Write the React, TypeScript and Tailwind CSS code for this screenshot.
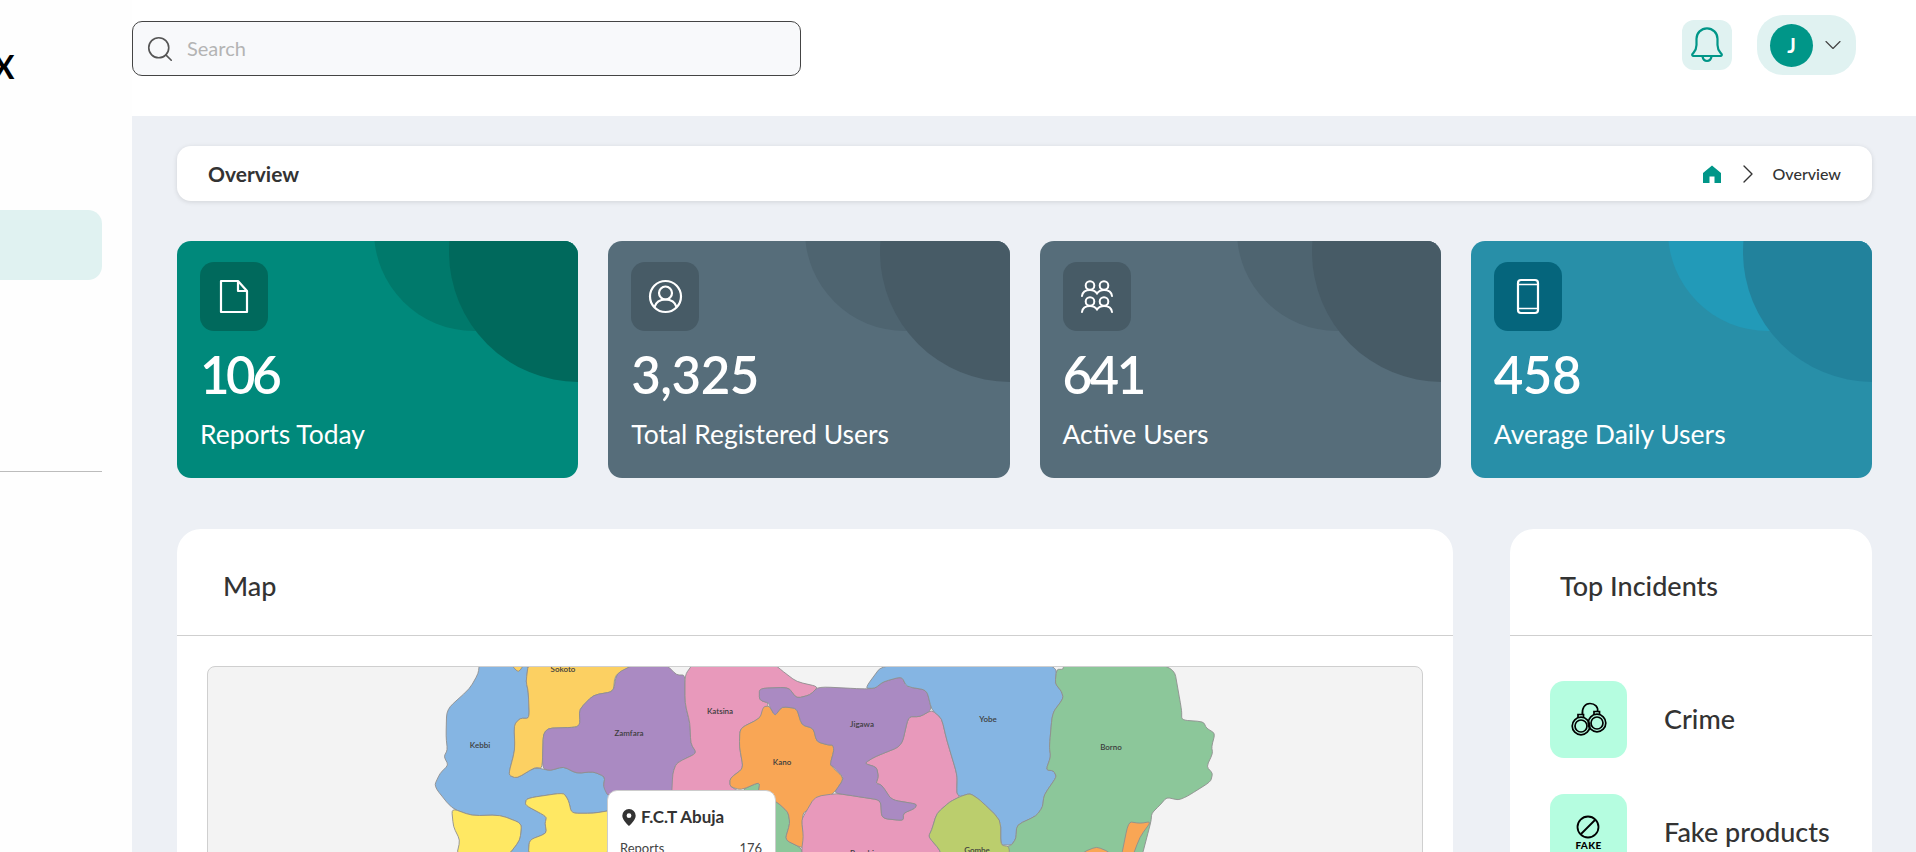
import React from "react";
import { Search, ChevronDown, ChevronRight } from "lucide-react";

type P = [number, number];
const z5 = (a: P[]): P[] => a.map(([x, y]) => [420 + x / 3, 650 + y / 3]);
const z6 = (a: P[]): P[] => a.map(([x, y]) => [820 + x / 3, 650 + y / 3]);

const lerp = (a: P, b: P, t: number): P => [a[0] + (b[0] - a[0]) * t, a[1] + (b[1] - a[1]) * t];
const fx = (p: P) => `${p[0].toFixed(1)} ${p[1].toFixed(1)}`;
const smooth = (p: P[]) => {
  const n = p.length;
  const t = 0.28;
  let d = `M${fx(lerp(p[n - 1], p[0], 1 - t))}`;
  for (let i = 0; i < n; i++) {
    const prev = p[(i + n - 1) % n];
    const next = p[(i + 1) % n];
    d += `L${fx(lerp(prev, p[i], 1 - t))}Q${fx(p[i])} ${fx(lerp(p[i], next, t))}`;
  }
  return d + "Z";
};

const regions: { fill: string; pts: P[] }[] = [
  { fill: "#85b5e3", pts: z5([[178,40],[175,70],[150,115],[80,178],[78,260],[82,300],[72,320],[85,345],[60,370],[42,408],[95,475],[155,497],[240,495],[305,520],[300,570],[265,616],[325,616],[328,570],[380,550],[375,520],[380,500],[315,465],[320,445],[430,428],[445,450],[455,490],[520,490],[580,480],[580,420],[550,410],[555,380],[520,365],[470,370],[430,350],[390,362],[345,352],[290,385],[265,375],[285,300],[282,225],[300,205],[328,205],[325,125],[318,95],[325,40]]) },
  { fill: "#fcd062", pts: z5([[325,40],[318,95],[325,125],[328,205],[300,205],[282,225],[285,300],[265,375],[290,385],[345,352],[367,355],[370,235],[470,232],[480,220],[478,178],[520,135],[580,125],[585,75],[640,45]]) },
  { fill: "#fcd062", pts: z5([[270,40],[295,68],[315,40]]) },
  { fill: "#aa8ac2", pts: z5([[640,45],[590,70],[580,125],[520,135],[478,178],[480,220],[470,232],[370,235],[367,355],[390,362],[430,350],[470,370],[520,365],[555,380],[550,410],[565,440],[770,440],[758,370],[770,338],[830,310],[812,280],[810,220],[795,160],[795,75],[770,75],[740,45]]) },
  { fill: "#e899bb", pts: z5([[820,40],[795,75],[795,160],[810,220],[812,280],[830,310],[770,338],[758,370],[755,440],[990,440],[930,410],[930,385],[970,355],[958,290],[960,235],[1020,205],[1048,160],[1018,150],[1020,115],[1105,112],[1130,145],[1170,135],[1195,110],[1130,95],[1090,65],[1060,40]]) },
  { fill: "#8cc79a", pts: [[741,790],[760,782],[758,795],[777,802],[788,812],[790,823],[785,840],[802,848],[806,870],[770,870],[765,800]] },
  { fill: "#f9a655", pts: [...z5([[930,410],[930,385],[970,355],[958,290],[960,235],[1020,205],[1030,170],[1048,168],[1065,198],[1085,170],[1130,175],[1145,225],[1180,235],[1190,275],[1225,285]]), [833,745],[834,750],[830,765],[844,778],[835,792],[815,808],[803,812],[802,827],[807,845],[802,848],[785,840],[790,823],[788,812],[777,802],[765,798],[758,794],[760,782],[741,790]] },
  { fill: "#e899bb", pts: [...z6([[-15,440],[50,430],[115,440],[182,450],[185,505],[250,512],[250,490],[285,475],[290,462],[215,450],[185,405],[168,400],[175,380],[170,352],[133,340],[165,320],[245,288],[265,200],[300,200],[335,180],[365,205],[380,270],[412,375],[410,430],[420,440],[390,455],[350,490],[335,540],[325,560],[360,600],[370,640],[-50,640],[-55,600],[-50,560],[-55,510],[-45,490]])] },
  { fill: "#aa8ac2", pts: [...z5([[1018,115],[1105,112],[1130,145],[1170,135],[1195,110]]), ...z6([[130,117],[165,115],[190,95],[245,80],[260,110],[320,120],[335,180],[300,200],[265,200],[245,288],[165,320],[133,340],[170,352],[175,380],[168,400],[185,405],[215,450],[290,462],[285,475],[250,490],[250,512],[185,505],[182,450],[115,440],[50,430],[45,425],[73,385],[40,350],[30,345],[42,300],[38,285]]), ...z5([[1225,285],[1190,275],[1180,235],[1145,225],[1130,175],[1085,170],[1065,198],[1048,168],[1048,160],[1018,150]])] },
  { fill: "#85b5e3", pts: z6([[190,40],[135,115],[165,115],[190,95],[245,80],[260,110],[320,120],[335,180],[365,205],[380,270],[412,375],[410,430],[420,440],[450,430],[480,450],[542,510],[542,585],[575,585],[588,565],[590,525],[650,497],[668,470],[672,435],[710,380],[700,362],[678,360],[692,320],[688,290],[697,190],[730,145],[725,125],[705,100],[710,58],[680,40]]) },
  { fill: "#8cc79a", pts: z6([[710,58],[705,100],[725,125],[730,145],[697,190],[688,290],[692,320],[678,360],[700,362],[710,380],[672,435],[668,470],[650,497],[590,525],[588,565],[575,585],[560,590],[560,640],[960,640],[993,515],[995,490],[1020,465],[1040,442],[1075,450],[1100,440],[1172,395],[1178,370],[1160,350],[1178,310],[1175,290],[1185,250],[1160,235],[1150,215],[1085,210],[1085,180],[1060,40],[730,40],[730,58]]) },
  { fill: "#bbce6d", pts: z6([[420,440],[450,430],[480,450],[542,510],[542,585],[568,590],[568,640],[370,640],[360,600],[325,560],[335,540],[350,490],[390,455]]) },
  { fill: "#f9a655", pts: z6([[925,515],[960,520],[993,515],[960,560],[930,640],[900,640]]) },
  { fill: "#f9a655", pts: z6([[770,640],[790,606],[830,590],[868,606],[885,640]]) },
  { fill: "#ffe863", pts: z5([[95,475],[155,497],[240,495],[305,520],[300,570],[265,616],[110,616],[120,570],[100,530]]) },
  { fill: "#ffe863", pts: z5([[315,465],[320,445],[430,428],[445,450],[455,490],[520,490],[580,480],[580,616],[325,616],[328,570],[380,550],[375,520],[380,500]]) },
];

const labels: [string, number, number][] = [
  ["Sokoto", 563, 672], ["Kebbi", 480, 748], ["Zamfara", 629, 736], ["Katsina", 720, 714],
  ["Kano", 782, 765], ["Jigawa", 862, 727], ["Yobe", 988, 722], ["Borno", 1111, 750],
  ["Gombe", 977, 853], ["Bauchi", 862, 856],
];

function NigeriaMap() {
  return (
    <svg viewBox="208 667 1214 186" className="block h-[186px] w-[1214px]">
      {regions.map((r, i) => (
        <path key={i} d={smooth(r.pts)} fill={r.fill} stroke="#8f8f8f" strokeWidth="0.9" strokeLinejoin="round" />
      ))}
      {labels.map(([t, x, y]) => (
        <text key={t} x={x} y={y} textAnchor="middle" fontSize="8" fontWeight="600" fill="#3d3d3d" fontFamily="Lato, sans-serif">{t}</text>
      ))}
    </svg>
  );
}

const BellIcon = () => (
  <svg width="50" height="50" viewBox="0 0 50 50" fill="none" stroke="#009688" strokeWidth="2.200" strokeLinejoin="round">
    <path d="M11.500 36h27c1.200 0 1.700-1 1-2-2-2.500-4-4-4-9v-6.200a10.500 10.500 0 0 0-21 0V25c0 5-2 6.500-4 9-.7 1-.2 2 1 2z" />
    <path d="M20.500 36.500c.5 2.800 2.200 4.500 4.500 4.500s4-1.700 4.500-4.500" />
  </svg>
);
const FileIcon = () => (
  <svg width="30" height="35" viewBox="0 0 30 35" fill="none" stroke="#fff" strokeWidth="2.200" strokeLinejoin="round">
    <path d="M2 2h17l9 10v21H2z" />
    <path d="M19 2v10h9" />
  </svg>
);
const UserIcon = () => (
  <svg width="35" height="35" viewBox="0 0 35 35" fill="none" stroke="#fff" strokeWidth="2.200">
    <circle cx="17.500" cy="17.500" r="15.500" />
    <circle cx="17.500" cy="14" r="6.500" />
    <path d="M6.500 28c1.500-5 5.500-7.500 11-7.500s9.500 2.500 11 7.500" />
  </svg>
);
const GroupIcon = () => (
  <svg width="34" height="34" viewBox="0 0 34 34" fill="none" stroke="#fff" strokeWidth="2" strokeLinecap="round">
    <circle cx="10" cy="5.500" r="4.300" /><circle cx="24" cy="5.500" r="4.300" />
    <path d="M2 16c.5-4 3.500-6 8-6 3 0 5.500 1.200 7 3.500 1.500-2.300 4-3.500 7-3.500 4.500 0 7.500 2 8 6" />
    <circle cx="10" cy="21.500" r="4.300" /><circle cx="24" cy="21.500" r="4.300" />
    <path d="M2 32c.5-4 3.500-6 8-6 3 0 5.500 1.200 7 3.500 1.500-2.300 4-3.500 7-3.500 4.500 0 7.500 2 8 6" />
  </svg>
);
const PhoneIcon = () => (
  <svg width="24" height="37" viewBox="0 0 24 37" fill="none" stroke="#fff" strokeWidth="2.200">
    <rect x="2" y="2" width="20" height="33" rx="3" />
    <path d="M2 6.500h20M2 30.500h20" strokeWidth="1.600" />
  </svg>
);
const Cuffs = () => (
  <svg width="36" height="36" viewBox="0 0 36 36" fill="none" stroke="#000" strokeWidth="1.700">
    <circle cx="10" cy="24" r="8.800" /><circle cx="10" cy="24" r="6" />
    <circle cx="26" cy="21" r="8.800" /><circle cx="26" cy="21" r="6" />
    <path d="M11.500 13C10.500 6 14 1.500 19 1.500S27.500 5 26.500 9.500" />
    <path d="M7 15.500V12.500h5.500v3M23 12.500V9.500h5.500v3" />
  </svg>
);
const Fake = () => (
  <div className="flex flex-col items-center">
    <svg width="24" height="24" viewBox="0 0 24 24" fill="none" stroke="#000" strokeWidth="1.800">
      <circle cx="12" cy="12" r="10.500" /><path d="M5 19L19 5" />
    </svg>
    <span className="mt-[1px] text-[10px] leading-[11px] font-black tracking-[0.3px] text-black">FAKE</span>
  </div>
);

type Card = { n: string; nc: string; l: string; bg: string; c1: string; c2: string; box: string; icon: React.ReactNode };
const cards: Card[] = [
  { n: "106", nc: "tracking-[-3.5px]", l: "Reports Today", bg: "bg-[#00897b]", c1: "bg-[#00796b]", c2: "bg-[#00695c]", box: "bg-[#00695c]", icon: <FileIcon /> },
  { n: "3,325", nc: "tracking-[-0.5px]", l: "Total Registered Users", bg: "bg-[#566d7a]", c1: "bg-[#4e6470]", c2: "bg-[#475b66]", box: "bg-[#475b66]", icon: <UserIcon /> },
  { n: "641", nc: "tracking-[-2.5px]", l: "Active Users", bg: "bg-[#566d7a]", c1: "bg-[#4e6470]", c2: "bg-[#475b66]", box: "bg-[#475b66]", icon: <GroupIcon /> },
  { n: "458", nc: "tracking-[-0.5px]", l: "Average Daily Users", bg: "bg-[#288fa8]", c1: "bg-[#229ab8]", c2: "bg-[#22829c]", box: "bg-[#05657c]", icon: <PhoneIcon /> },
];

function StatCard({ c }: { c: Card }) {
  return (
    <div className={`relative h-[237px] overflow-hidden rounded-[14px] px-[23px] pt-[21px] text-white ${c.bg}`}>
      <div className={`absolute left-[197px] top-[-110px] h-[200px] w-[200px] rounded-full ${c.c1}`} />
      <div className={`absolute left-[272px] top-[-119px] h-[260px] w-[260px] rounded-full ${c.c2}`} />
      <div className={`relative flex h-[69px] w-[68px] items-center justify-center rounded-[14px] ${c.box}`}>{c.icon}</div>
      <div className={`relative mt-[13px] text-[51px] leading-[62px] font-semibold ${c.nc}`}>{c.n}</div>
      <div className="relative mt-[12px] text-[26.5px] leading-[32px] font-normal">{c.l}</div>
    </div>
  );
}

export default function App() {
  return (
    <div className="flex h-[852px] w-[1916px] overflow-hidden bg-white font-['Lato',sans-serif] text-[#333]">
      <aside className="flex w-[132px] shrink-0 flex-col overflow-hidden bg-[#fefefe]">
        <div className="mt-[48px] -ml-[7px] text-[32px] leading-[38px] font-bold text-black">X</div>
        <div className="mt-[124px] h-[70px] w-[102px] rounded-r-[14px] bg-[#e0f2f1]" />
        <div className="mt-[191px] h-[1px] w-[102px] bg-[#bcbcbc]" />
      </aside>
      <main className="flex min-w-0 flex-1 flex-col">
        <header className="flex h-[116px] shrink-0 items-start justify-between bg-white pr-[60px]">
          <div className="mt-[21px] flex h-[55px] w-[669px] items-center rounded-[10px] border border-[#444] bg-[#f8f9fb] pl-[12px]">
            <Search size={30} strokeWidth={1.3} color="#555" />
            <span className="mb-[2px] ml-[12px] text-[20px] text-[#b4b4b4]">Search</span>
          </div>
          <div className="mt-[15px] flex items-start gap-[25px]">
            <div className="mt-[5px] flex h-[50px] w-[50px] items-center justify-center rounded-[12px] bg-[#e0f2f1]">
              <BellIcon />
            </div>
            <div className="flex h-[60px] w-[99px] items-center rounded-[26px] bg-[#e0f2f1] pl-[13px]">
              <div className="flex h-[43px] w-[43px] items-center justify-center rounded-full bg-[#009688] text-[20px] font-bold text-white">J</div>
              <ChevronDown size={28} strokeWidth={1} color="#444" className="ml-[6px]" />
            </div>
          </div>
        </header>
        <div className="min-h-0 flex-1 bg-[#edf0f5] pt-[30px] pr-[44px] pl-[45px]">
          <div className="flex h-[55px] items-center justify-between rounded-[14px] bg-white pr-[31px] pl-[31px] shadow-[0_1px_5px_rgba(0,0,0,0.12)]">
            <span className="text-[21px] font-bold text-[#333]">Overview</span>
            <div className="flex items-center">
              <svg width="18" height="18" viewBox="0 0 18 18" fill="#009688">
                <path d="M9 .5L18 8v10h-6.500v-6.500h-5V18H0V8z" />
              </svg>
              <ChevronRight size={32} strokeWidth={1} color="#333" className="ml-[11px]" />
              <span className="ml-[9px] text-[16px] font-medium text-[#333]">Overview</span>
            </div>
          </div>
          <div className="mt-[40px] grid grid-cols-4 gap-[30px]">
            {cards.map((c) => <StatCard key={c.l} c={c} />)}
          </div>
          <div className="mt-[51px] flex justify-between">
            <section className="h-[500px] w-[1276px] rounded-[24px] bg-white">
              <div className="flex h-[107px] items-center border-b border-[#cfcfcf] pt-[9px] pl-[46px] text-[27px] font-medium text-[#333]">Map</div>
              <div className="px-[30px] pt-[30px]">
                <div className="relative h-[300px] overflow-hidden rounded-[8px] border border-[#cfcfcf] bg-[#f3f3f3]">
                  <NigeriaMap />
                  <div className="absolute top-[123px] left-[399px] h-[120px] w-[169px] rounded-[10px] border border-[#ccc] bg-white px-[12px] pt-[16px]">
                    <div className="flex items-center gap-[5px] text-[17px] leading-[20px] font-bold text-[#333]">
                      <svg width="14" height="17" viewBox="0 0 14 17" className="ml-[2px]">
                        <path fillRule="evenodd" fill="#333" d="M7 0a6.700 6.700 0 0 1 6.700 6.700C13.700 11 7 17 7 17S.3 11 .3 6.700A6.700 6.700 0 0 1 7 0zm0 4.300a2.400 2.400 0 1 0 0 4.800 2.400 2.400 0 0 0 0-4.800z" />
                      </svg>
                      F.C.T Abuja
                    </div>
                    <div className="mt-[13px] flex justify-between pr-[1px] text-[13px] leading-[16px] text-[#444]">
                      <span>Reports</span><span>176</span>
                    </div>
                  </div>
                </div>
              </div>
            </section>
            <section className="h-[500px] w-[362px] rounded-[24px] bg-white">
              <div className="flex h-[107px] items-center border-b border-[#cfcfcf] pt-[9px] pl-[50px] text-[27px] font-medium text-[#333]">Top Incidents</div>
              <div className="flex flex-col gap-[36px] pt-[45px] pl-[40px]">
                <div className="flex items-center gap-[37px]">
                  <div className="flex h-[77px] w-[77px] items-center justify-center rounded-[14px] bg-[#b5fde0]"><Cuffs /></div>
                  <span className="text-[27px] font-medium text-[#333]">Crime</span>
                </div>
                <div className="flex items-center gap-[37px]">
                  <div className="flex h-[77px] w-[77px] items-center justify-center rounded-[14px] bg-[#b5fde0]"><Fake /></div>
                  <span className="text-[27px] font-medium text-[#333]">Fake products</span>
                </div>
              </div>
            </section>
          </div>
        </div>
      </main>
    </div>
  );
}
